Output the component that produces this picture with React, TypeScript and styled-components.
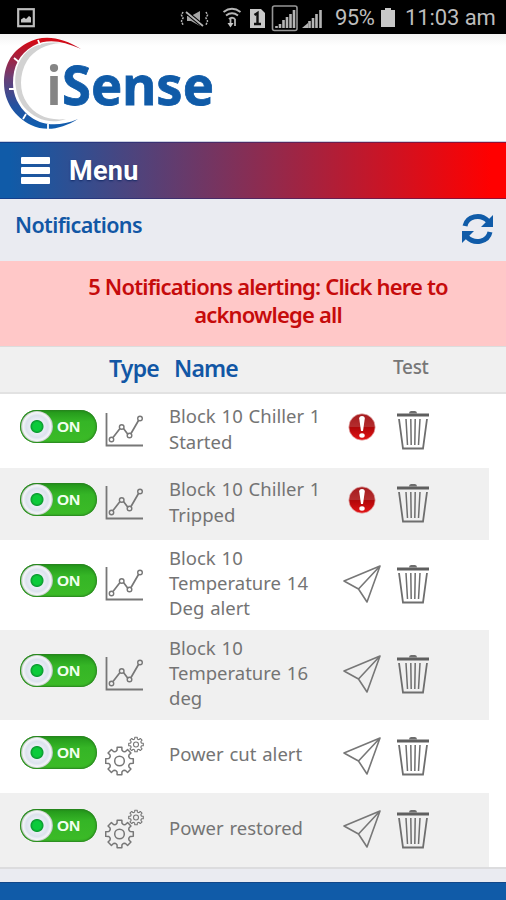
import React from "react";
import styled, { createGlobalStyle } from "styled-components";

const Global = createGlobalStyle`
  * { box-sizing: border-box; }
  body { margin: 0; background: #fff; font-family: "Noto Sans", "Open Sans", sans-serif; }
  svg { display: block; flex: none; }
`;

const Screen = styled.div`
  width: 506px;
  height: 900px;
  overflow: hidden;
  display: flex;
  flex-direction: column;
  background: #fff;
`;

const StatusBar = styled.div`
  height: 34px;
  flex: none;
  background: #000;
  color: #bdbdbd;
  display: flex;
  align-items: center;
  padding: 2px 11px 0 17px;
  font: 22px/32px Roboto, sans-serif;
`;

const StatusIcons = styled.div`
  display: flex;
  align-items: center;
  margin-left: auto;
`;

const Battery = styled.span`
  margin-left: 11px;
  width: 46px;
  letter-spacing: -0.55px;
`;

const Clock = styled.span`
  margin-left: 10px;
  width: 90px;
  white-space: nowrap;
  letter-spacing: -0.1px;
`;

const LogoBar = styled.div`
  height: 108px;
  flex: none;
  background: linear-gradient(#f3f3f3, #fff 12px);
  border-bottom: 1px solid #c9cfe0;
`;

const MenuBar = styled.div`
  height: 57px;
  flex: none;
  display: flex;
  align-items: center;
  padding-left: 21px;
  gap: 19px;
  background: linear-gradient(90deg, #105ba8 0%, #105ba8 2%, #ff0000 97%);
  box-shadow: inset 0 1px 0 rgba(20, 30, 110, 0.45), inset 0 -1px 0 rgba(20, 30, 110, 0.45);
`;

const Burger = styled.div`
  width: 29px;
  height: 27px;
  display: flex;
  flex-direction: column;
  justify-content: space-between;
`;

const BurgerLine = styled.span`
  height: 7px;
  background: #fff;
  border-radius: 1px;
`;

const MenuLabel = styled.span`
  color: #fff;
  font: 700 27px/40px Roboto, sans-serif;
  letter-spacing: 0.3px;
  text-shadow: 0 1px 2px #142a66;
`;

const TitleBar = styled.div`
  height: 62px;
  flex: none;
  display: flex;
  justify-content: space-between;
  padding: 10px 12px 0 15px;
  background: #eaebf1;
`;

const Title = styled.h1`
  margin: 0;
  color: #1257a5;
  font-size: 21.5px;
  line-height: 32px;
  font-weight: 600;
  letter-spacing: -0.62px;
`;

const RefreshSlot = styled.div`
  padding-top: 4px;
`;

const AlertBanner = styled.div`
  height: 85px;
  flex: none;
  background: #ffc8c8;
  color: #c60b0b;
  padding: 11px 0 0 30px;
  text-align: center;
  font-size: 22px;
  font-weight: 600;
  line-height: 28px;
  letter-spacing: -0.82px;
`;

const TableHead = styled.div`
  height: 48px;
  flex: none;
  display: grid;
  grid-template-columns: 65px 219px 1fr;
  padding-left: 109px;
  background: #f0f0f0;
  border-top: 1px solid #dcdcdc;
  border-bottom: 2px solid #e2e2e2;
`;

const HeadCell = styled.span<{ $muted?: boolean }>`
  color: ${(p) => (p.$muted ? "#777" : "#1257a5")};
  font-size: ${(p) => (p.$muted ? "19px" : "23px")};
  line-height: ${(p) => (p.$muted ? "41px" : "43px")};
  font-weight: ${(p) => (p.$muted ? 500 : 600)};
  letter-spacing: ${(p) => (p.$muted ? "-0.3px" : "-0.8px")};
`;

const Row = styled.div<{ $height: number; $shaded: boolean }>`
  width: 489px;
  height: ${(p) => p.$height}px;
  flex: none;
  display: grid;
  grid-template-columns: 85px 64px 174px 54px 1fr;
  align-items: center;
  padding: 0 0 2px 20px;
  background: ${(p) => (p.$shaded ? "#f0f0f0" : "#fff")};
`;

const Switch = styled.div`
  width: 77px;
  height: 33px;
  margin-bottom: 7px;
  display: flex;
  align-items: center;
  border-radius: 17px;
  background: linear-gradient(#22951a, #35b526 35%, #3cbb27);
  box-shadow: inset 0 0 2px 1px #28811f;
`;

const Knob = styled.span`
  width: 32px;
  height: 31px;
  margin-left: 1px;
  border-radius: 50%;
  background: radial-gradient(circle, #0ccb3b 0 4px, #0c9b31 6px, #e9edf5 7px, #dce2ed 11px, #f4f5f9 14px, #a9b8aa 16px);
`;

const SwitchText = styled.span`
  margin-left: 4px;
  color: #f2fff0;
  font: 700 15.5px/31px "Liberation Sans", sans-serif;
`;

const Name = styled.div`
  color: #747474;
  font-size: 18.5px;
  line-height: 25.2px;
  padding-bottom: 3px;
  white-space: pre-line;
  word-spacing: 1px;
`;

const Action = styled.div<{ $raised?: boolean }>`
  width: 38px;
  display: flex;
  justify-content: center;
  padding-bottom: ${(p) => (p.$raised ? "6px" : "0")};
`;

const Footer = styled.div`
  height: 15px;
  flex: none;
  background: #eaebf1;
  border-top: 2px solid #dcdcde;
`;

const BottomBar = styled.div`
  flex: 1;
  background: #105ba8;
  border-top: 1px solid #124789;
`;

const PictureIcon = () => (
  <svg width="18" height="20" viewBox="0 0 18 20">
    <rect x="1.2" y="1.2" width="15.6" height="17" fill="none" stroke="#bdbdbd" strokeWidth="2.2" />
    <path d="M4 14.5v-3l3-2 2 1.500 3-3 2 1.500v5z" fill="#c4c4c4" />
  </svg>
);

const StatusGlyphs = () => (
  <svg width="144" height="30" viewBox="180 2 144 30" fill="none" stroke="#b5b5b5">
    <path d="M183 11l-1.500 3 1.500 3-1.500 3 1.500 4M206 11l1.500 3-1.500 3 1.500 3-1.500 4" strokeWidth="1.500" strokeDasharray="2 1" />
    <path d="M187 15h4l9-5v15l-9-5h-4z" fill="#a5a5a5" stroke="none" />
    <path d="M186 11l17 14" stroke="#000" strokeWidth="4" />
    <path d="M186 11l17 14" strokeWidth="1.800" />
    <path d="M223.500 11q8.500-6.500 17 0M226 14.500q6-4.500 12 0M229 18q3-2.500 6 0" strokeWidth="2" />
    <path d="M230.500 17v6M235 18v7" strokeWidth="1.800" />
    <path d="M227.500 22h6l-3 4.500z" fill="#c8c8c8" stroke="none" />
    <path d="M250 8h11l4 4v15h-15z" fill="#c8c8c8" stroke="none" />
    <path d="M254.500 14l3-2v11M254 23h7" stroke="#111" strokeWidth="2.400" />
    <rect x="272.500" y="5" width="24.500" height="24.500" rx="2" stroke="#969696" strokeWidth="1.600" />
    <path d="M276.500 27v-2M280 27v-4M283.500 27v-8M287 27V16M290.500 27V13M294 27V9" strokeWidth="2.600" />
    <path d="M309.500 27v-7M313 27V17M316.500 27V13M320.500 27V9" strokeWidth="2.600" />
    <path d="M302 27l6-5v5z" fill="#b5b5b5" stroke="none" />
  </svg>
);

const BatteryIcon = () => (
  <svg width="14" height="22" viewBox="0 0 14 22">
    <path d="M4 1h6v2h4v17H0V3h4z" fill="#c8c8c8" />
  </svg>
);

const Logo = () => (
  <svg width="240" height="106" viewBox="0 34 240 106">
    <defs>
      <linearGradient id="arc" x1="0" y1="37" x2="0" y2="129" gradientUnits="userSpaceOnUse">
        <stop offset="0.05" stopColor="#d20b17" />
        <stop offset="0.45" stopColor="#684077" />
        <stop offset="0.75" stopColor="#2452a0" />
        <stop offset="1" stopColor="#0e5fb0" />
      </linearGradient>
    </defs>
    <path d="M81 49C62 37 43 34 27 43C10 52 4 67 4 83C4 102 15 117 31 125C46 132 62 129 78 119C57 128 40 125 28 115C18 106 13 95 13 83C13 67 19 54 33 46C48 38 62 41 81 49Z" fill="url(#arc)" />
    <path d="M61 43C42 41 28 47 21 59C12 73 14 94 24 107C35 119 50 125 66 119C48 121 35 115 27 103C19 92 19 74 27 61C34 50 46 44 61 43Z" fill="#d2d2d2" />
    <path d="M14 58l5 4M9 89h6M23 119l3-5M48 129v-5M38 40l2 5" stroke="#fff" strokeWidth="1.800" />
    <text x="46.500" y="105" fontFamily="Noto Sans, sans-serif" fontWeight="700" fontSize="53" fill="#858585" textLength="15" lengthAdjust="spacingAndGlyphs">i</text>
    <text x="62" y="104.500" fontFamily="Noto Sans, sans-serif" fontWeight="700" fontSize="54" fill="#105ba8" stroke="#105ba8" strokeWidth="0.800" textLength="152" lengthAdjust="spacingAndGlyphs">Sense</text>
  </svg>
);

const RefreshIcon = () => (
  <svg width="33" height="32" viewBox="0 0 33 32" fill="none" stroke="#105ba8" strokeWidth="5">
    <path d="M4 13C6 3.500 19 0 27 8" />
    <path d="M32 2v12H20z" fill="#105ba8" stroke="none" />
    <path d="M29 19C27 28.500 14 32 6 24" />
    <path d="M1 30V18h12z" fill="#105ba8" stroke="none" />
  </svg>
);

const ChartIcon = () => (
  <svg width="39" height="35" viewBox="0 0 39 35" fill="none" stroke="#777" strokeWidth="1.400">
    <path d="M1.500 0v32.500H38" strokeWidth="1.800" />
    <path d="M8 24.500l7-9M18.500 15.500l4.500 6M26 20.500l7.500-13" strokeWidth="1.700" />
    <circle cx="6.500" cy="26.500" r="2.200" />
    <circle cx="16.700" cy="14" r="2.300" />
    <circle cx="24.500" cy="22.500" r="2.300" />
    <circle cx="35" cy="5.500" r="2.300" />
  </svg>
);

function gearPath(cx: number, cy: number, r: number) {
  const points: string[] = [];
  const profile: [number, number][] = [
    [-0.32, 0.74],
    [-0.22, 0.8],
    [-0.17, 1],
    [0.17, 1],
    [0.22, 0.8],
    [0.32, 0.74],
  ];
  for (let tooth = 0; tooth < 8; tooth++) {
    for (const [offset, scale] of profile) {
      const angle = (tooth * Math.PI) / 4 + offset;
      points.push(`${(cx + r * scale * Math.cos(angle)).toFixed(2)} ${(cy + r * scale * Math.sin(angle)).toFixed(2)}`);
    }
  }
  return `M${points.join("L")}Z`;
}

const GearsIcon = () => (
  <svg width="40" height="40" viewBox="0 0 40 40" fill="none" stroke="#777" strokeLinejoin="round">
    <path d={gearPath(14.5, 25, 14)} strokeWidth="1.500" />
    <circle cx="14.500" cy="25" r="4.800" strokeWidth="1.500" />
    <path d={gearPath(31, 8.5, 7.4)} strokeWidth="1.100" />
    <circle cx="31" cy="8.500" r="2.500" strokeWidth="1.100" />
  </svg>
);

const WarningIcon = () => (
  <svg width="28" height="28" viewBox="0 0 28 28">
    <defs>
      <linearGradient id="ball" x1="0" y1="0" x2="0" y2="1">
        <stop offset="0" stopColor="#a51a1d" />
        <stop offset="0.48" stopColor="#b32d2e" />
        <stop offset="0.52" stopColor="#b10709" />
        <stop offset="1" stopColor="#e31315" />
      </linearGradient>
    </defs>
    <circle cx="14" cy="14" r="13.200" fill="url(#ball)" stroke="#e6b8b8" strokeWidth="0.700" />
    <path d="M11.200 5.500q0-2.500 2.800-2.500t2.800 2.500L15 18h-2z" fill="#fff" />
    <ellipse cx="14" cy="22.500" rx="2.700" ry="2.200" fill="#fff" />
  </svg>
);

const PlaneIcon = () => (
  <svg width="38" height="38" viewBox="0 0 38 38" fill="none" stroke="#777" strokeWidth="1.600" strokeLinejoin="round">
    <path d="M37 1L1 16l14.500 8L24 37zM37 1L15.500 24" />
  </svg>
);

const TrashIcon = () => (
  <svg width="32" height="40" viewBox="0 0 32 40" fill="none" stroke="#6e6e6e">
    <path d="M0 5h32" strokeWidth="3" stroke="#5f5f5f" />
    <path d="M12 3.500q0-2.500 2-2.500h4q2 0 2 2.500z" fill="#6e6e6e" stroke="none" />
    <path d="M2 9l4 29.500h20l4-29.500" strokeWidth="1.800" />
    <path d="M9 9l1.500 26M13.800 9l.4 26M18.200 9l-.4 26M23 9l-1.500 26" strokeWidth="1.500" />
  </svg>
);

type Notification = { name: string; kind: "chart" | "gears"; alerting?: boolean; height: number };

const notifications: Notification[] = [
  { name: "Block 10 Chiller 1\nStarted", kind: "chart", alerting: true, height: 74 },
  { name: "Block 10 Chiller 1\nTripped", kind: "chart", alerting: true, height: 72 },
  { name: "Block 10\nTemperature 14\nDeg alert", kind: "chart", height: 90 },
  { name: "Block 10\nTemperature 16\ndeg", kind: "chart", height: 90 },
  { name: "Power cut alert", kind: "gears", height: 73 },
  { name: "Power restored", kind: "gears", height: 74 },
];

export default function App() {
  return (
    <Screen>
      <Global />
      <StatusBar>
        <PictureIcon />
        <StatusIcons>
          <StatusGlyphs />
          <Battery>95%</Battery>
          <BatteryIcon />
          <Clock>11:03 am</Clock>
        </StatusIcons>
      </StatusBar>
      <LogoBar>
        <Logo />
      </LogoBar>
      <MenuBar>
        <Burger>
          <BurgerLine />
          <BurgerLine />
          <BurgerLine />
        </Burger>
        <MenuLabel>Menu</MenuLabel>
      </MenuBar>
      <TitleBar>
        <Title>Notifications</Title>
        <RefreshSlot>
          <RefreshIcon />
        </RefreshSlot>
      </TitleBar>
      <AlertBanner>
        5 Notifications alerting: Click here to
        <br />
        acknowlege all
      </AlertBanner>
      <TableHead>
        <HeadCell>Type</HeadCell>
        <HeadCell>Name</HeadCell>
        <HeadCell $muted>Test</HeadCell>
      </TableHead>
      {notifications.map((item, index) => (
        <Row key={item.name} $height={item.height} $shaded={index % 2 === 1}>
          <Switch>
            <Knob />
            <SwitchText>ON</SwitchText>
          </Switch>
          {item.kind === "chart" ? <ChartIcon /> : <GearsIcon />}
          <Name>{item.name}</Name>
          <Action $raised={item.alerting}>{item.alerting ? <WarningIcon /> : <PlaneIcon />}</Action>
          <TrashIcon />
        </Row>
      ))}
      <Footer />
      <BottomBar />
    </Screen>
  );
}
